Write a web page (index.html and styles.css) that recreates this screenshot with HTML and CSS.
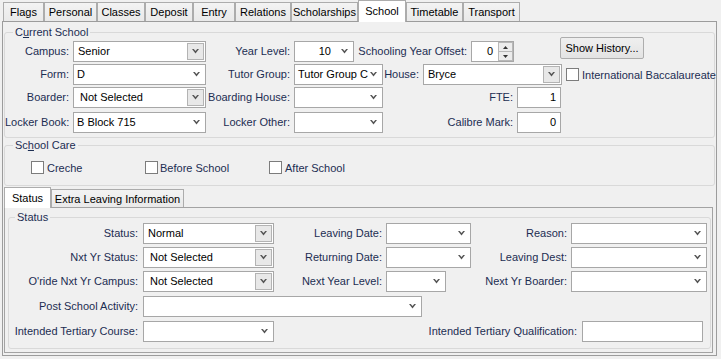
FILE: index.html
```html
<!DOCTYPE html>
<html>
<head>
<meta charset="utf-8">
<link rel="stylesheet" href="styles.css">
</head>
<body>
<div class="tabbar">
  <div class="tab t-flags">Flags</div>
  <div class="tab t-personal">Personal</div>
  <div class="tab t-classes">Classes</div>
  <div class="tab t-deposit">Deposit</div>
  <div class="tab t-entry">Entry</div>
  <div class="tab t-relations">Relations</div>
  <div class="tab t-scholar">Scholarships</div>
  <div class="tab sel t-school">School</div>
  <div class="tab t-timetable">Timetable</div>
  <div class="tab t-transport">Transport</div>
</div>
<div class="page">
  <fieldset class="group g-current">
    <legend>C<u>u</u>rrent School</legend>
    <div class="row r-gap2">
      <span class="lbl w68">Campus:</span>
      <div class="combo boxed w133"><span class="val">Senior</span><span class="btn"><svg class="chev" width="7" height="5" viewBox="0 0 7 5"><polygon points="0,0 1.8,0 3.5,2 5.2,0 7,0 3.5,4.5" fill="#555"/></svg></span></div>
      <span class="lbl w88">Year Level:</span>
      <div class="combo w60"><span class="val right">10</span><svg class="chev" width="7" height="5" viewBox="0 0 7 5"><polygon points="0,0 1.8,0 3.5,2 5.2,0 7,0 3.5,4.5" fill="#555"/></svg></div>
      <span class="lbl w117">Schooling Year Offset:</span>
      <div class="spin"><span class="val">0</span><span class="spinbtns"><span class="sb"><svg width="5" height="3" viewBox="0 0 5 3"><polygon points="2.5,0 5,3 0,3" fill="#333"/></svg></span><span class="sb"><svg width="5" height="3" viewBox="0 0 5 3"><polygon points="0,0 5,0 2.5,3" fill="#333"/></svg></span></span></div>
      <div class="button">Show History...</div>
    </div>
    <div class="row r-gap2">
      <span class="lbl w68">Form:</span>
      <div class="combo w133"><span class="val">D</span><svg class="chev" width="7" height="5" viewBox="0 0 7 5"><polygon points="0,0 1.8,0 3.5,2 5.2,0 7,0 3.5,4.5" fill="#555"/></svg></div>
      <span class="lbl w88">Tutor Group:</span>
      <div class="combo w89"><span class="val">Tutor Group C</span><svg class="chev" width="7" height="5" viewBox="0 0 7 5"><polygon points="0,0 1.8,0 3.5,2 5.2,0 7,0 3.5,4.5" fill="#555"/></svg></div>
      <span class="lbl w40">House:</span>
      <div class="combo boxed w139"><span class="val">Bryce</span><span class="btn"><svg class="chev" width="7" height="5" viewBox="0 0 7 5"><polygon points="0,0 1.8,0 3.5,2 5.2,0 7,0 3.5,4.5" fill="#555"/></svg></span></div>
      <span class="cb cb-ib"></span><span class="cbtext">International Baccalaureate</span>
    </div>
    <div class="row r-gap4">
      <span class="lbl w68">Boarder:</span>
      <div class="combo boxed w133"><span class="val ns">Not Selected</span><span class="btn"><svg class="chev" width="7" height="5" viewBox="0 0 7 5"><polygon points="0,0 1.8,0 3.5,2 5.2,0 7,0 3.5,4.5" fill="#555"/></svg></span></div>
      <span class="lbl w88">Boarding House:</span>
      <div class="combo w89"><span class="val"></span><svg class="chev" width="7" height="5" viewBox="0 0 7 5"><polygon points="0,0 1.8,0 3.5,2 5.2,0 7,0 3.5,4.5" fill="#555"/></svg></div>
      <span class="lbl w134">FTE:</span>
      <div class="edit w44">1</div>
    </div>
    <div class="row">
      <span class="lbl w68">Locker Book:</span>
      <div class="combo w133"><span class="val">B Block 715</span><svg class="chev" width="7" height="5" viewBox="0 0 7 5"><polygon points="0,0 1.8,0 3.5,2 5.2,0 7,0 3.5,4.5" fill="#555"/></svg></div>
      <span class="lbl w88">Locker Other:</span>
      <div class="combo w89"><span class="val"></span><svg class="chev" width="7" height="5" viewBox="0 0 7 5"><polygon points="0,0 1.8,0 3.5,2 5.2,0 7,0 3.5,4.5" fill="#555"/></svg></div>
      <span class="lbl w134">Calibre Mark:</span>
      <div class="edit w44">0</div>
    </div>
  </fieldset>

  <fieldset class="group g-care">
    <legend>Sc<u>h</u>ool Care</legend>
    <div class="care-row">
      <label class="cbitem ci1"><span class="cb"></span><span class="cbtext">Creche</span></label>
      <label class="cbitem ci2"><span class="cb"></span><span class="cbtext">Before School</span></label>
      <label class="cbitem ci3"><span class="cb"></span><span class="cbtext">After School</span></label>
    </div>
  </fieldset>

  <div class="itabs">
    <div class="itab sel it-status">Status</div>
    <div class="itab it-extra">Extra Leaving Information</div>
  </div>
  <div class="ipanel">
    <fieldset class="group g-status">
      <legend>Status</legend>
      <div class="row first r-gap3">
        <span class="lbl w134 pr5">Status:</span>
        <div class="combo boxed w131"><span class="val">Normal</span><span class="btn"><svg class="chev" width="7" height="5" viewBox="0 0 7 5"><polygon points="0,0 1.8,0 3.5,2 5.2,0 7,0 3.5,4.5" fill="#555"/></svg></span></div>
        <span class="lbl w112">Leaving Date:</span>
        <div class="combo w85"><span class="val"></span><svg class="chev" width="7" height="5" viewBox="0 0 7 5"><polygon points="0,0 1.8,0 3.5,2 5.2,0 7,0 3.5,4.5" fill="#555"/></svg></div>
        <span class="lbl w100">Reason:</span>
        <div class="combo w136"><span class="val"></span><svg class="chev" width="7" height="5" viewBox="0 0 7 5"><polygon points="0,0 1.8,0 3.5,2 5.2,0 7,0 3.5,4.5" fill="#555"/></svg></div>
      </div>
      <div class="row r-gap3">
        <span class="lbl w134 pr5">Nxt Yr Status:</span>
        <div class="combo boxed w131"><span class="val ns">Not Selected</span><span class="btn"><svg class="chev" width="7" height="5" viewBox="0 0 7 5"><polygon points="0,0 1.8,0 3.5,2 5.2,0 7,0 3.5,4.5" fill="#555"/></svg></span></div>
        <span class="lbl w112">Returning Date:</span>
        <div class="combo w85"><span class="val"></span><svg class="chev" width="7" height="5" viewBox="0 0 7 5"><polygon points="0,0 1.8,0 3.5,2 5.2,0 7,0 3.5,4.5" fill="#555"/></svg></div>
        <span class="lbl w100">Leaving Dest:</span>
        <div class="combo w136"><span class="val"></span><svg class="chev" width="7" height="5" viewBox="0 0 7 5"><polygon points="0,0 1.8,0 3.5,2 5.2,0 7,0 3.5,4.5" fill="#555"/></svg></div>
      </div>
      <div class="row r-gap4">
        <span class="lbl w134 pr5">O'ride Nxt Yr Campus:</span>
        <div class="combo boxed w131"><span class="val ns">Not Selected</span><span class="btn"><svg class="chev" width="7" height="5" viewBox="0 0 7 5"><polygon points="0,0 1.8,0 3.5,2 5.2,0 7,0 3.5,4.5" fill="#555"/></svg></span></div>
        <span class="lbl w112">Next Year Level:</span>
        <div class="combo w60"><span class="val"></span><svg class="chev" width="7" height="5" viewBox="0 0 7 5"><polygon points="0,0 1.8,0 3.5,2 5.2,0 7,0 3.5,4.5" fill="#555"/></svg></div>
        <span class="lbl w125">Next Yr Boarder:</span>
        <div class="combo w136"><span class="val"></span><svg class="chev" width="7" height="5" viewBox="0 0 7 5"><polygon points="0,0 1.8,0 3.5,2 5.2,0 7,0 3.5,4.5" fill="#555"/></svg></div>
      </div>
      <div class="row r-gap4">
        <span class="lbl w134 pr5">Post School Activity:</span>
        <div class="combo w279"><span class="val"></span><svg class="chev" width="7" height="5" viewBox="0 0 7 5"><polygon points="0,0 1.8,0 3.5,2 5.2,0 7,0 3.5,4.5" fill="#555"/></svg></div>
      </div>
      <div class="row">
        <span class="lbl w134 pr5">Intended Tertiary Course:</span>
        <div class="combo w131"><span class="val"></span><svg class="chev" width="7" height="5" viewBox="0 0 7 5"><polygon points="0,0 1.8,0 3.5,2 5.2,0 7,0 3.5,4.5" fill="#555"/></svg></div>
        <span class="lbl w308 pr5">Intended Tertiary Qualification:</span>
        <div class="edit w121"></div>
      </div>
    </fieldset>
  </div>
</div>
</body>
</html>
```
FILE: styles.css
```css
html, body {
  margin: 0;
  padding: 0;
}
body {
  width: 721px;
  height: 359px;
  overflow: hidden;
  background: #f0f0f0;
  font-family: "Liberation Sans", Arial, sans-serif;
  font-size: 11px;
  color: #000;
}

/* ---------- top tabs ---------- */
.tabbar {
  display: flex;
  align-items: flex-end;
  height: 21px;
  padding-left: 3px;
  position: relative;
  z-index: 1;
}
.tab {
  box-sizing: border-box;
  height: 19px;
  border: 1px solid #acacac;
  border-bottom: none;
  background: linear-gradient(#f3f3f3, #e9e9e9);
  text-align: center;
  line-height: 19px;
  white-space: nowrap;
  flex: none;
}
.tab.sel {
  height: 22px;
  margin-bottom: -1px;
  background: #fff;
  line-height: 21px;
}
.t-flags { width: 41px; }
.t-personal { width: 53px; }
.t-classes { width: 48px; }
.t-deposit { width: 48px; }
.t-entry { width: 42px; }
.t-relations { width: 56px; }
.t-scholar { width: 67px; }
.t-school { width: 48px; }
.t-timetable { width: 57px; }
.t-transport { width: 57px; }

/* ---------- page ---------- */
.page {
  box-sizing: border-box;
  margin-left: 2px;
  width: 715px;
  height: 335px;
  border: 1px solid #9c9c9c;
  background: #f0f0f0;
}

.group {
  margin: 0 1px;
  padding: 0;
  border: 1px solid #d9d9d9;
  border-radius: 3px;
  min-width: 0;
}
.group legend {
  padding: 0 2px;
  margin-left: 8px;
  line-height: 13px;
  color: #1c2d52;
}
.g-current {
  margin-top: 4px;
  padding: 2px 0 4px;
}
.g-care {
  margin-top: 1px;
  padding: 9px 0 11px;
}

.row {
  display: flex;
  height: 21px;
  align-items: center;
}
.r-gap2 { margin-bottom: 2px; }
.r-gap3 { margin-bottom: 3px; }
.r-gap4 { margin-bottom: 4px; }
.row.first { margin-top: -1px; }

.lbl {
  flex: none;
  box-sizing: border-box;
  text-align: right;
  padding-right: 4px;
  line-height: 21px;
  white-space: nowrap;
  color: #1c2d52;
}
.pr5 { padding-right: 5px; }

.w40 { width: 40px; }
.w44 { width: 44px; }
.w60 { width: 60px; }
.w68 { width: 68px; }
.w85 { width: 85px; }
.w88 { width: 88px; }
.w89 { width: 89px; }
.w100 { width: 100px; }
.w112 { width: 112px; }
.w117 { width: 117px; }
.w121 { width: 121px; }
.w125 { width: 125px; }
.w131 { width: 131px; }
.w133 { width: 133px; }
.w134 { width: 134px; }
.w136 { width: 136px; }
.w139 { width: 139px; }
.w279 { width: 279px; }
.w308 { width: 308px; }

/* ---------- combos ---------- */
.combo {
  flex: none;
  box-sizing: border-box;
  height: 21px;
  border: 1px solid #a7a7a7;
  background: #fff;
  display: flex;
  align-items: center;
  overflow: hidden;
}
.combo .val {
  flex: 1;
  min-width: 0;
  padding-left: 3px;
  white-space: nowrap;
  overflow: hidden;
  line-height: 19px;
}
.combo .val.right {
  text-align: right;
  padding-right: 10px;
}
.combo.boxed .val { padding-left: 4px; }
.combo .val.ns { padding-left: 6px; }
.combo > .chev {
  flex: none;
  margin-right: 5px;
}
.combo .btn {
  flex: none;
  box-sizing: border-box;
  width: 17px;
  height: 17px;
  margin-right: 1px;
  border: 1px solid #b3b3b3;
  background: #e8e8e8;
  display: flex;
  align-items: center;
  justify-content: center;
}
.chev { display: block; }

/* ---------- spin edit ---------- */
.spin {
  flex: none;
  box-sizing: border-box;
  width: 43px;
  height: 21px;
  border: 1px solid #a7a7a7;
  background: #fff;
  display: flex;
}
.spin .val {
  flex: 1;
  text-align: right;
  padding-right: 5px;
  line-height: 19px;
}
.spinbtns {
  flex: none;
  width: 15px;
  display: flex;
  flex-direction: column;
}
.sb {
  flex: 1;
  box-sizing: border-box;
  border: 1px solid #b8b8b8;
  background: #ececec;
  display: flex;
  align-items: center;
  justify-content: center;
}
.sb + .sb { border-top: none; }
.sb svg { display: block; }

/* ---------- button ---------- */
.button {
  flex: none;
  box-sizing: border-box;
  width: 84px;
  height: 22px;
  margin-left: 46px;
  align-self: flex-start;
  margin-top: -4px;
  border: 1px solid #adadad;
  border-radius: 2px;
  background: linear-gradient(#efefef, #e3e3e3);
  text-align: center;
  line-height: 20px;
  white-space: nowrap;
}

/* ---------- edits ---------- */
.edit {
  flex: none;
  box-sizing: border-box;
  height: 21px;
  border: 1px solid #a7a7a7;
  background: #fff;
  text-align: right;
  padding-right: 4px;
  line-height: 19px;
}

/* ---------- checkboxes ---------- */
.cb {
  flex: none;
  box-sizing: border-box;
  width: 13px;
  height: 13px;
  border: 1px solid #7c7c7c;
  background: #fff;
  display: inline-block;
}
.cb-ib { margin-left: 4px; }
.cbtext {
  white-space: nowrap;
  margin-left: 3px;
  color: #1c2d52;
}
.care-row {
  display: flex;
  height: 13px;
  padding-left: 26px;
}
.cbitem {
  flex: none;
  display: flex;
  align-items: center;
  height: 13px;
}
.ci1 { width: 114px; }
.ci2 { width: 124px; }
.ci2 .cbtext { margin-left: 2px; }

/* ---------- inner tabs ---------- */
.itabs {
  display: flex;
  align-items: flex-end;
  height: 21px;
  padding-left: 1px;
  position: relative;
  z-index: 1;
}
.itab {
  box-sizing: border-box;
  height: 18px;
  border: 1px solid #acacac;
  border-bottom: none;
  background: linear-gradient(#f3f3f3, #e9e9e9);
  text-align: center;
  line-height: 18px;
  white-space: nowrap;
  flex: none;
}
.itab.sel {
  height: 21px;
  margin-bottom: -1px;
  background: #fff;
  line-height: 20px;
}
.it-status { width: 47px; }
.it-extra { width: 133px; }

.ipanel {
  box-sizing: border-box;
  margin-left: 1px;
  width: 709px;
  height: 146px;
  border: 1px solid #a3a3a3;
}
.g-status {
  margin: 3px 1px 3px 3px;
  padding: 0 0 6px;
}
.g-status legend { margin-left: 6px; }
```
